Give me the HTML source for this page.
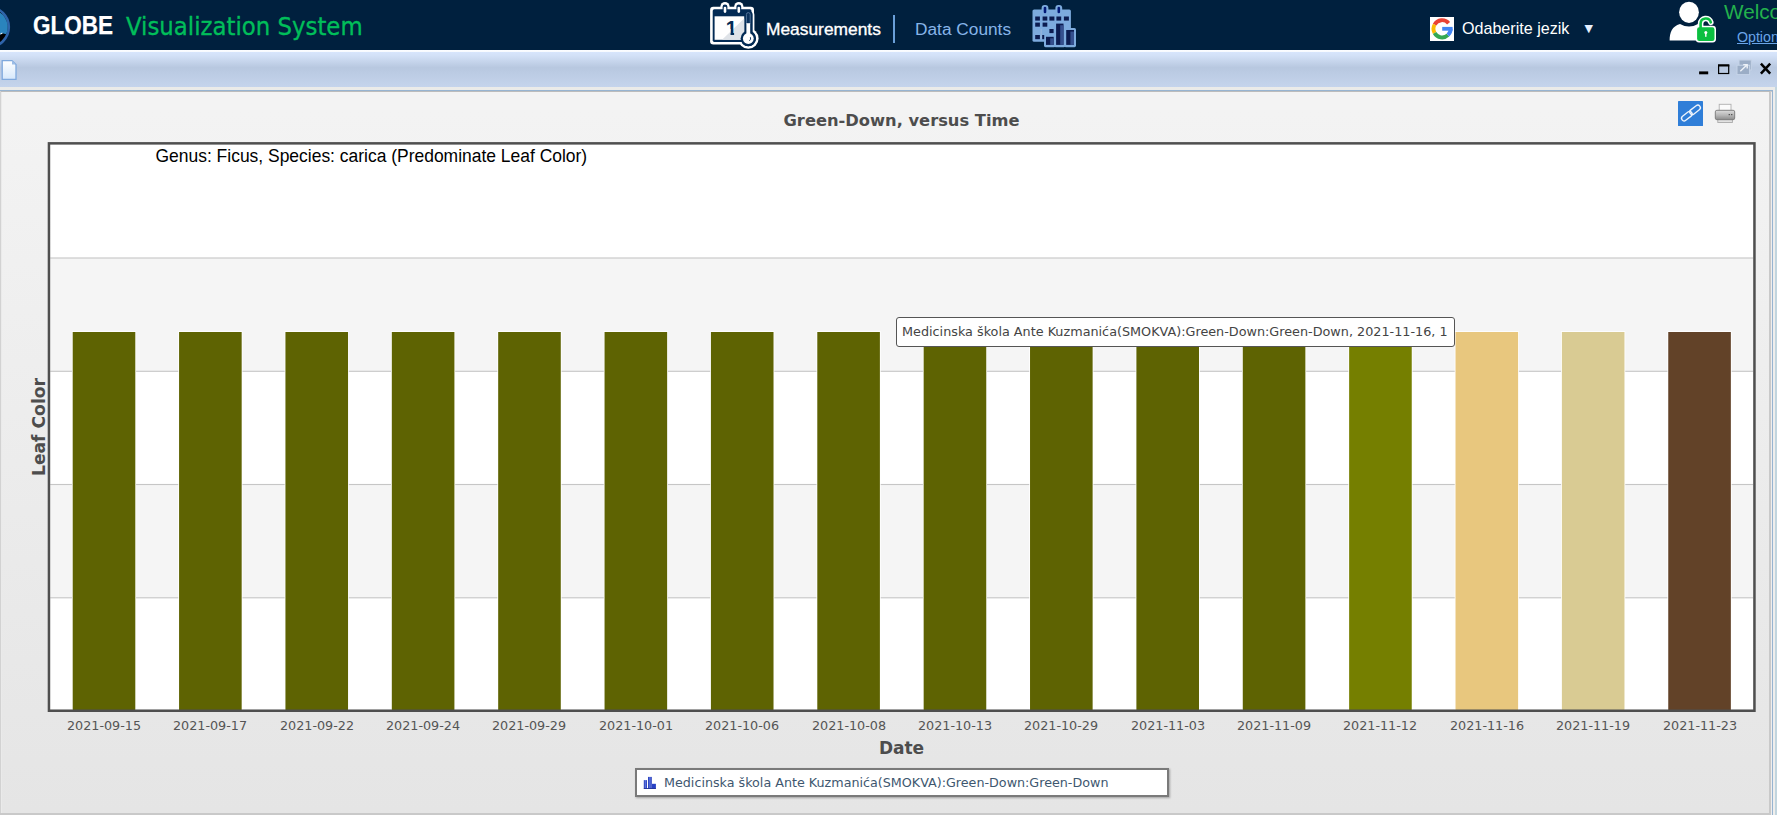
<!DOCTYPE html>
<html lang="en">
<head>
<meta charset="utf-8">
<title>GLOBE Visualization System</title>
<style>
html,body{margin:0;padding:0;}
body{width:1777px;height:815px;overflow:hidden;position:relative;background:#e9e9e9;font-family:"Liberation Sans",sans-serif;}
.abs{position:absolute;}
#hdr{left:0;top:0;width:1777px;height:50px;background:#00203e;overflow:hidden;}
#hdr .t{position:absolute;white-space:nowrap;line-height:1;}
#tb{left:0;top:50px;width:1777px;height:37px;background:linear-gradient(to bottom,#eef4fd 0px,#ffffff 0.7px,#ffffff 1.3px,#d7e5fc 2.3px,#d2e0f6 6px,#b8c8e0 17.5px,#bccce4 24px,#c5d4ec 37px);}
#strip{left:0;top:87px;width:1775px;height:3px;background:#ebebe9;}
#bl{left:0;top:90px;width:1773px;height:1px;background:#93b3d2;}
#panel{left:2px;top:92px;width:1767px;height:720.6px;background:linear-gradient(to bottom,#f3f3f3 0px,#f3f3f3 20px,#e5e5e5 720px);}
.xl{position:absolute;top:719px;width:106px;text-align:center;font:12.4px/14px "DejaVu Sans",sans-serif;color:#555;white-space:nowrap;transform:scaleX(1.03);}
.vd{font-family:"DejaVu Sans",sans-serif;white-space:nowrap;}
</style>
</head>
<body>
<div id="hdr" class="abs">
  <svg class="abs" style="left:0;top:0" width="14" height="50" viewBox="0 0 14 50">
    <circle cx="-11.2" cy="27.1" r="20" fill="#000" stroke="#2f64aa" stroke-width="2.6"/>
    <path d="M-11 9.4 A17.7 17.7 0 0 1 6.2 34.2 L2.5 33.2 L0.5 34.6 L-11 36 Z" fill="#2a84bd"/><path d="M0.3 33.4 L2.2 32.6 L2.6 33.6 L0.6 34.4 Z" fill="#e8f2fa"/>
  </svg>

  <svg class="abs" id="ic-cal" style="left:700px;top:0" width="70" height="50" viewBox="700 0 70 50">
   <g fill="#fff">
    <rect x="710.1" y="6.7" width="43.9" height="37.8" rx="3.2"/>
    <rect x="720.4" y="2" width="9.2" height="10" rx="4.6"/>
    <rect x="734.2" y="2" width="9.2" height="10" rx="4.6"/>
    <rect x="744.2" y="9.6" width="10.2" height="30" rx="5.1"/>
    <circle cx="748.3" cy="38.5" r="10.3"/>
   </g>
   <rect x="712.7" y="9.3" width="38.8" height="32.6" rx="1.6" fill="#032b55"/>
   <circle cx="748.3" cy="38.5" r="7.7" fill="#032b55"/>
   <rect x="745.9" y="11.4" width="6.8" height="28" rx="3.4" fill="#032b55"/>
   <rect x="714.6" y="16.3" width="29.6" height="23.5" fill="#fff"/>
   <path d="M744.2 18.5 V39.8 H722 Z" fill="#dfe3e8"/>
   <circle cx="748.3" cy="38.5" r="7.7" fill="#032b55"/>
   <rect x="722.6" y="4.4" width="4.8" height="9.4" rx="2.4" fill="#032b55"/>
   <rect x="736.4" y="4.4" width="4.8" height="9.4" rx="2.4" fill="#032b55"/>
   <rect x="723.7" y="6.7" width="2.6" height="6.2" rx="1.3" fill="#fff"/>
   <rect x="737.5" y="6.7" width="2.6" height="6.2" rx="1.3" fill="#fff"/>
   <rect x="746.4" y="12.6" width="3.8" height="12" rx="1.9" fill="#0a315c" stroke="#5b7a9e" stroke-width=".9"/>
   <rect x="746.4" y="23.2" width="3.8" height="13" fill="#fff"/>
   <circle cx="748.3" cy="38.5" r="5.4" fill="#fff"/>
   <path d="M750.4 37.2 Q751.3 39.4 749.4 40.8" stroke="#032b55" stroke-width=".9" fill="none"/>
   <clipPath id="oneclip"><path d="M722 16 H734.1 V37 H730.5 V29 H722 Z"/></clipPath><text x="731.4" y="34.7" text-anchor="middle" clip-path="url(#oneclip)" style="font-family:'Liberation Sans',sans-serif;font-weight:bold" font-size="20" fill="#032b55">1</text>
  </svg>
  <svg class="abs" id="ic-dc" style="left:1020px;top:0" width="70" height="50" viewBox="1020 0 70 50">
   <g fill="#7dabde">
    <rect x="1032.5" y="9.4" width="38.4" height="32.4" rx="1.6"/>
    <rect x="1041.6" y="5" width="6.8" height="10" rx="3"/>
    <rect x="1055.4" y="5" width="6.8" height="10" rx="3"/>
    <rect x="1044" y="34.8" width="11.7" height="12.4" rx="1.6"/>
    <rect x="1054.1" y="21.6" width="11.4" height="25.6" rx="1.6"/>
    <rect x="1064.2" y="28" width="11.8" height="19.2" rx="1.6"/>
   </g>
   <rect x="1043.7" y="6.8" width="2.6" height="6.4" rx="1.3" fill="#031a78"/>
   <rect x="1057.5" y="6.8" width="2.6" height="6.4" rx="1.3" fill="#031a78"/>
   <g fill="#0c1c50">
    <rect x="1035.2" y="16.5" width="4.7" height="4.1"/><rect x="1042.6" y="16.5" width="4.7" height="4.1"/><rect x="1049.4" y="16.5" width="5" height="4.1"/><rect x="1056.4" y="16.5" width="4.8" height="4.1"/><rect x="1063.9" y="16.5" width="5" height="4.1"/>
    <rect x="1035.2" y="22.6" width="4.7" height="4.1"/><rect x="1042.6" y="22.6" width="4.7" height="4.1"/>
    <rect x="1049.4" y="29" width="4.2" height="4.1"/>
    <rect x="1035.2" y="35" width="4.7" height="4.2"/><rect x="1042.2" y="35" width="2" height="4.2"/>
    <rect x="1046" y="36.8" width="7.7" height="8.1"/>
    <rect x="1056.1" y="23.6" width="7.4" height="21.3"/>
    <rect x="1066.2" y="30" width="7.8" height="14.9"/>
   </g>
   <g fill="#35508f">
    <rect x="1050.2" y="38.3" width="3.5" height="6.6"/>
    <rect x="1060.2" y="25.2" width="3.3" height="19.7"/>
    <rect x="1070.4" y="31.6" width="3.6" height="13.3"/>
   </g>
   <rect x="1040.6" y="29" width="1.2" height="10" fill="#96b4dd"/>
  </svg>
  <svg class="abs" id="ic-g" style="left:1430px;top:17px" width="24" height="24" viewBox="0 0 24 24">
   <rect width="24" height="24" fill="#fff"/>
   <g fill="none" stroke-width="3.9">
    <path d="M18.6 6.2 A8.5 8.5 0 0 0 4.6 7.6" stroke="#ea4335"/>
    <path d="M4.6 7.6 A8.5 8.5 0 0 0 4.6 16.0" stroke="#fbbc05"/>
    <path d="M4.6 16.0 A8.5 8.5 0 0 0 17.9 18.1" stroke="#34a853"/>
    <path d="M17.9 18.1 A8.5 8.5 0 0 0 20.7 11.8" stroke="#4285f4"/>
   </g>
   <rect x="12.2" y="9.9" width="10.4" height="3.8" fill="#4285f4"/>
  </svg>
  <svg class="abs" id="ic-user" style="left:1660px;top:0" width="64" height="50" viewBox="1660 0 64 50">
   <ellipse cx="1689" cy="12.3" rx="9.9" ry="10.6" fill="#fff"/>
   <path d="M1669.6 40.6 C1669.8 32 1672 26.5 1680 24 Q1689 29 1698 24 C1704 26 1706.5 30 1707 40.6 Z" fill="#fff"/>
   <rect x="1695.6" y="25.8" width="20.4" height="16.6" rx="3.4" fill="#fff"/>
   <path d="M1700.6 27 V23.5 A5.2 5.2 0 0 1 1710.8 22.3" fill="none" stroke="#fff" stroke-width="5.6" stroke-linecap="round"/>
   <path d="M1700.6 28 V23.5 A5.2 5.2 0 0 1 1710.8 22.3" fill="none" stroke="#0bbf40" stroke-width="2.6" stroke-linecap="round"/>
   <rect x="1697.1" y="27.2" width="17.4" height="13.8" rx="2.2" fill="#0bbf40"/>
   <circle cx="1705.8" cy="32.6" r="1.5" fill="#fff"/><rect x="1705.1" y="32.6" width="1.4" height="4.2" fill="#fff"/>
  </svg>
  <div class="t" id="t-globe" style="left:32.9px;top:11px;font:bold 25px/28px 'Liberation Sans',sans-serif;color:#fff;-webkit-text-stroke:0.25px #fff;transform:scaleX(0.9);transform-origin:0 0;">GLOBE</div>
  <div class="t" id="t-vis" style="left:126.4px;top:12.5px;font:24.5px/28px 'DejaVu Sans',sans-serif;color:#00be5a;-webkit-text-stroke:0.35px #00be5a;transform:scaleX(0.932);transform-origin:0 0;">Visualization System</div>
  <div class="t" id="t-meas" style="left:766px;top:19px;font:17.37px/20px 'Liberation Sans',sans-serif;color:#fff;-webkit-text-stroke:0.35px #fff;">Measurements</div>
  <div class="abs" style="left:893px;top:15px;width:2px;height:28px;background:#6a9fd8;"></div>
  <div class="t" id="t-dc" style="left:915px;top:19px;font:17.3px/20px 'Liberation Sans',sans-serif;color:#86b4e8;">Data Counts</div>
  <div class="t" id="t-lang" style="left:1462px;top:19px;font:16.1px/18px 'Liberation Sans',sans-serif;color:#fff;">Odaberite jezik</div>
  <div class="t" id="t-arrow" style="left:1584.6px;top:21px;font:11px/16px 'DejaVu Sans',sans-serif;color:#e4efff;">▼</div>
  <div class="t" id="t-wel" style="left:1724px;top:1px;font:20.7px/22px 'Liberation Sans',sans-serif;color:#23b14d;">Welcome</div>
  <div class="t" id="t-opt" style="left:1737px;top:29px;font:14.2px/16px 'Liberation Sans',sans-serif;color:#6aa5e8;text-decoration:underline;">Options</div>
</div>
<div id="tb" class="abs"></div>
<div id="strip" class="abs"></div>
<div class="abs" style="left:1775px;top:87px;width:2px;height:728px;background:#c2d5de;"></div>
<div class="abs" style="left:1773px;top:90px;width:2px;height:725px;background:#efeeec;"></div>
<div class="abs" style="left:0;top:90px;width:1773px;height:725px;background:#97b4d1;"></div>
<div class="abs" style="left:0;top:91px;width:1772px;height:724px;background:#c9c9c9;"></div>
<div class="abs" style="left:0;top:91px;width:1770px;height:1px;background:#bcbcbc;"></div>
<div class="abs" style="left:1770.6px;top:92px;width:1.4px;height:723px;background:#eeeeee;"></div>
<div id="panel" class="abs"></div>
<div class="abs" style="left:0;top:91px;width:1px;height:722px;background:#d2d2d2;"></div>
<div class="abs" style="left:1px;top:92px;width:1px;height:721px;background:#eaeaea;"></div>
<svg class="abs" style="left:0;top:50px" width="1777" height="40" viewBox="0 0 1777 40">
 <defs><linearGradient id="docg" x1="0" y1="0" x2="0" y2="1"><stop offset="0" stop-color="#ffffff"/><stop offset="1" stop-color="#d6e8fb"/></linearGradient></defs>
 <path d="M2.2 10.6 H12 L16 14.6 V29.4 H2.2 Z" fill="url(#docg)" stroke="#7fa9dd" stroke-width="1.3"/>
 <path d="M12 10.6 V14.6 H16 Z" fill="#9dbde6"/>
 <rect x="1699.1" y="21.4" width="9.1" height="2.9" fill="#000"/>
 <rect x="1718.6" y="15.4" width="10.1" height="8.1" fill="none" stroke="#000" stroke-width="1.2"/>
 <rect x="1718" y="14.3" width="11.3" height="2.2" fill="#000"/>
 <rect x="1739" y="10" width="12.3" height="10" fill="#9badc6" stroke="#c6d4e8" stroke-width="1"/>
 <rect x="1737" y="15.2" width="12.6" height="9.4" fill="#9badc6" stroke="#c6d4e8" stroke-width="1"/>
 <path d="M1740.3 21.3 L1746.6 15.2 M1743.2 14.6 H1747.2 V18.6" fill="none" stroke="#eef2f8" stroke-width="1.4"/>
 <path d="M1760.9 13.7 L1770.2 23.6 M1770.2 13.7 L1760.9 23.6" stroke="#000" stroke-width="2.5" fill="none"/>
</svg>
<svg class="abs" style="left:1670px;top:95px" width="75" height="35" viewBox="1670 95 75 35">
 <defs><linearGradient id="prg" x1="0" y1="0" x2="0" y2="1"><stop offset="0" stop-color="#dcdcdc"/><stop offset=".55" stop-color="#b4b4b4"/><stop offset="1" stop-color="#8a8a8a"/></linearGradient></defs>
 <rect x="1678" y="101" width="25" height="25" rx=".6" fill="#2f7ed8"/>
 <g fill="none" stroke="#eef4fc" stroke-width="1.35">
  <rect x="-6" y="-2.6" width="12" height="5.2" rx="2.6" transform="translate(1695.05 109.8) rotate(-38)"/>
  <rect x="-6" y="-2.6" width="12" height="5.2" rx="2.6" transform="translate(1686.85 116.2) rotate(-38)"/>
 </g>
 <rect x="1719.2" y="104.3" width="11.8" height="8" fill="#fbfbfb" stroke="#b0b0b0" stroke-width=".9"/>
 <rect x="1717.8" y="117.5" width="14.6" height="5" fill="#e2e2e2" stroke="#ababab" stroke-width=".9"/>
 <rect x="1715.3" y="110.3" width="19.4" height="9.4" rx="1.6" fill="url(#prg)" stroke="#777" stroke-width=".9"/>
 <rect x="1728.6" y="114" width="1.4" height="1.2" fill="#555"/><rect x="1731" y="114" width="1.4" height="1.2" fill="#555"/>
</svg>
<svg id="chart" class="abs" style="left:0;top:0" width="1777" height="815" viewBox="0 0 1777 815">
<rect x="50.2" y="144.6" width="1703.0" height="564.9" fill="#fff"/>
<rect x="50.2" y="258.0" width="1703.0" height="113.3" fill="#f5f5f5"/>
<rect x="50.2" y="484.5" width="1703.0" height="113.3" fill="#f5f5f5"/>
<rect x="50.2" y="257.45" width="1703.0" height="1.1" fill="#c6c6c6"/>
<rect x="50.2" y="370.75" width="1703.0" height="1.1" fill="#c6c6c6"/>
<rect x="50.2" y="483.95" width="1703.0" height="1.1" fill="#c6c6c6"/>
<rect x="50.2" y="597.25" width="1703.0" height="1.1" fill="#c6c6c6"/>
<rect x="71.90" y="331.2" width="64.2" height="378.8" fill="#fff"/><rect x="72.70" y="332" width="62.6" height="378.0" fill="#5e6302"/>
<rect x="178.27" y="331.2" width="64.2" height="378.8" fill="#fff"/><rect x="179.07" y="332" width="62.6" height="378.0" fill="#5e6302"/>
<rect x="284.64" y="331.2" width="64.2" height="378.8" fill="#fff"/><rect x="285.44" y="332" width="62.6" height="378.0" fill="#5e6302"/>
<rect x="391.01" y="331.2" width="64.2" height="378.8" fill="#fff"/><rect x="391.81" y="332" width="62.6" height="378.0" fill="#5e6302"/>
<rect x="497.38" y="331.2" width="64.2" height="378.8" fill="#fff"/><rect x="498.18" y="332" width="62.6" height="378.0" fill="#5e6302"/>
<rect x="603.75" y="331.2" width="64.2" height="378.8" fill="#fff"/><rect x="604.55" y="332" width="62.6" height="378.0" fill="#5e6302"/>
<rect x="710.12" y="331.2" width="64.2" height="378.8" fill="#fff"/><rect x="710.92" y="332" width="62.6" height="378.0" fill="#5e6302"/>
<rect x="816.49" y="331.2" width="64.2" height="378.8" fill="#fff"/><rect x="817.29" y="332" width="62.6" height="378.0" fill="#5e6302"/>
<rect x="922.86" y="331.2" width="64.2" height="378.8" fill="#fff"/><rect x="923.66" y="332" width="62.6" height="378.0" fill="#5e6302"/>
<rect x="1029.23" y="331.2" width="64.2" height="378.8" fill="#fff"/><rect x="1030.03" y="332" width="62.6" height="378.0" fill="#5e6302"/>
<rect x="1135.60" y="331.2" width="64.2" height="378.8" fill="#fff"/><rect x="1136.40" y="332" width="62.6" height="378.0" fill="#5e6302"/>
<rect x="1241.97" y="331.2" width="64.2" height="378.8" fill="#fff"/><rect x="1242.77" y="332" width="62.6" height="378.0" fill="#5e6302"/>
<rect x="1348.34" y="331.2" width="64.2" height="378.8" fill="#fff"/><rect x="1349.14" y="332" width="62.6" height="378.0" fill="#757f00"/>
<rect x="1454.71" y="331.2" width="64.2" height="378.8" fill="#fff"/><rect x="1455.51" y="332" width="62.6" height="378.0" fill="#e8c77e"/>
<rect x="1561.08" y="331.2" width="64.2" height="378.8" fill="#fff"/><rect x="1561.88" y="332" width="62.6" height="378.0" fill="#d9cb93"/>
<rect x="1667.45" y="331.2" width="64.2" height="378.8" fill="#fff"/><rect x="1668.25" y="332" width="62.6" height="378.0" fill="#624228"/>
<rect x="48.95" y="143.35" width="1705.50" height="567.40" fill="none" stroke="#4f4f4f" stroke-width="2.5"/>
</svg>
<div class="xl" style="left:51.00px;">2021-09-15</div>
<div class="xl" style="left:157.37px;">2021-09-17</div>
<div class="xl" style="left:263.74px;">2021-09-22</div>
<div class="xl" style="left:370.11px;">2021-09-24</div>
<div class="xl" style="left:476.48px;">2021-09-29</div>
<div class="xl" style="left:582.85px;">2021-10-01</div>
<div class="xl" style="left:689.22px;">2021-10-06</div>
<div class="xl" style="left:795.59px;">2021-10-08</div>
<div class="xl" style="left:901.96px;">2021-10-13</div>
<div class="xl" style="left:1008.33px;">2021-10-29</div>
<div class="xl" style="left:1114.70px;">2021-11-03</div>
<div class="xl" style="left:1221.07px;">2021-11-09</div>
<div class="xl" style="left:1327.44px;">2021-11-12</div>
<div class="xl" style="left:1433.81px;">2021-11-16</div>
<div class="xl" style="left:1540.18px;">2021-11-19</div>
<div class="xl" style="left:1646.55px;">2021-11-23</div>
<div class="abs vd" id="t-title" style="left:0;top:111px;width:1803px;text-align:center;font-weight:bold;font-size:16.3px;line-height:20px;color:#4d4d4d;">Green-Down, versus Time</div>
<div class="abs" id="t-sub" style="left:155.5px;top:146px;font:17.47px/20px 'Liberation Sans',sans-serif;color:#000;white-space:nowrap;">Genus: Ficus, Species: carica (Predominate Leaf Color)</div>
<div class="abs vd" id="t-date" style="left:0;top:738px;width:1803px;text-align:center;font-weight:bold;font-size:17px;line-height:20px;color:#4d4d4d;">Date</div>
<div class="abs vd" id="t-y" style="left:28.5px;top:417px;width:20px;height:20px;"><div id="t-yi" style="position:absolute;left:50%;top:50%;transform:translate(-50%,-50%) rotate(-90deg);font-weight:bold;font-size:17.15px;line-height:20px;color:#4d4d4d;white-space:nowrap;">Leaf Color</div></div>
<div class="abs" id="legend" style="left:635.2px;top:768px;width:534px;height:29px;box-sizing:border-box;border:2px solid #7a7a7a;background:#fff;box-shadow:1px 1px 2px rgba(0,0,0,.3);"></div>
<svg class="abs" style="left:640px;top:774px" width="20" height="18" viewBox="640 774 20 18">
 <defs><linearGradient id="lb" x1="0" y1="0" x2="1" y2="0"><stop offset="0" stop-color="#2237b4"/><stop offset=".5" stop-color="#5d76e0"/><stop offset="1" stop-color="#2237b4"/></linearGradient></defs>
 <rect x="643.8" y="780.1" width="3.2" height="8.6" fill="url(#lb)"/>
 <rect x="648" y="776.9" width="3.8" height="11.8" fill="url(#lb)"/>
 <rect x="652" y="783.8" width="3.9" height="4.9" fill="#2741c4"/>
 <rect x="643.8" y="788" width="12.1" height=".9" fill="#1f2f96"/>
</svg>
<div class="abs vd" id="t-leg" style="left:664.2px;top:776px;font-size:12.4px;line-height:14px;transform:scaleX(1.026);transform-origin:0 0;color:#3e576f;">Medicinska škola Ante Kuzmanića(SMOKVA):Green-Down:Green-Down</div>
<div class="abs" id="tip" style="left:896px;top:317px;width:557px;height:28px;border:1px solid #555;border-radius:3px;background:#fff;"></div>
<div class="abs vd" id="t-tip" style="left:902px;top:325px;font-size:12.4px;line-height:14px;transform:scaleX(1.0316);transform-origin:0 0;color:#444;">Medicinska škola Ante Kuzmanića(SMOKVA):Green-Down:Green-Down, 2021-11-16, 1</div>
</body>
</html>
